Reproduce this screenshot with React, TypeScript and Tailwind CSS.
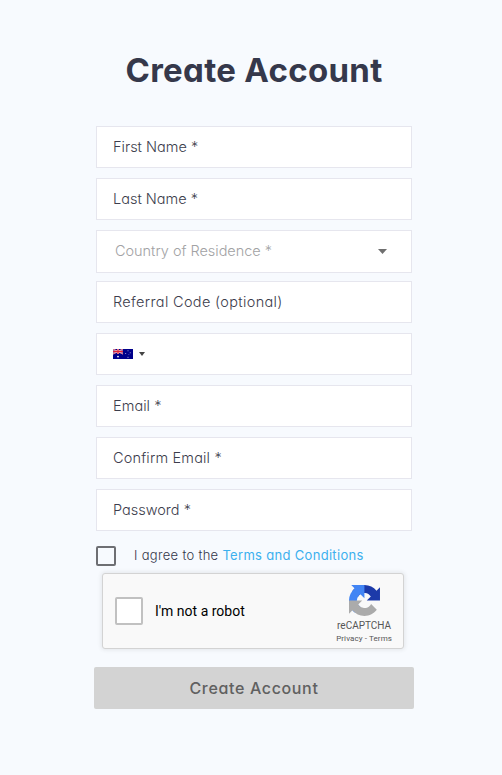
import { useState } from 'react';

type FieldProps = {
  label: string;
  textClass: string;
};

function Field({ label, textClass }: FieldProps) {
  return (
    <label className="flex h-[42px] items-center border border-[#e6e6ee] bg-white px-4">
      <span className={`whitespace-nowrap text-[14.5px] font-light text-[#3c3d4c] ${textClass}`}>{label}</span>
    </label>
  );
}

function Caret({ className }: { className: string }) {
  return (
    <svg viewBox="0 0 10 5" className={className} fill="currentColor" preserveAspectRatio="none">
      <path d="M0 0h10L5 5z" />
    </svg>
  );
}

function AustralianFlag() {
  return (
    <svg viewBox="0 0 20 10" className="h-[10px] w-5">
      <path fill="#00008b" d="M0 0h20v10H0z" />
      <path stroke="#fff" strokeWidth="1" d="M0 0l10 5M10 0L0 5" />
      <path stroke="#e0344a" strokeWidth=".7" d="M0 0l10 5M10 0L0 5" />
      <path stroke="#fff" strokeWidth="1.8" d="M5 0v5M0 2.5h10" />
      <path stroke="#e0243c" strokeWidth="1.3" d="M5 0v5M0 2.5h10" />
      <circle cx="5" cy="7.6" r=".9" fill="#fff" />
      <g fill="#c5c5e8">
        <circle cx="15" cy="1.8" r=".5" />
        <circle cx="12.7" cy="4.4" r=".5" />
        <circle cx="17.2" cy="3.8" r=".5" />
        <circle cx="15.9" cy="5.4" r=".35" />
        <circle cx="15" cy="8.3" r=".55" />
      </g>
    </svg>
  );
}

function RecaptchaLogo() {
  return (
    <svg viewBox="0 0 64 64" className="size-[31px]">
      <path
        fill="#1c3aa9"
        d="M64 31.955l-.033-1.37V4.687l-7.16 7.16C50.948 4.674 42.033.093 32.05.093c-10.4 0-19.622 4.96-25.458 12.64l11.736 11.86a15.55 15.55 0 0 1 4.754-5.334c2.05-1.6 4.952-2.906 8.968-2.906.485 0 .86.057 1.135.163 4.976.393 9.288 3.14 11.828 7.124l-8.307 8.307L64 31.953"
      />
      <path
        fill="#4285f4"
        d="M31.862.094l-1.37.033H4.594l7.16 7.16C4.58 13.147 0 22.06 0 32.046c0 10.4 4.96 19.622 12.64 25.458L24.5 45.768a15.55 15.55 0 0 1-5.334-4.754c-1.6-2.05-2.906-4.952-2.906-8.968 0-.485.057-.86.163-1.135.393-4.976 3.14-9.288 7.124-11.828l8.307 8.307L31.86.095"
      />
      <path
        fill="#ababab"
        d="M.001 32.045l.033 1.37v25.898l7.16-7.16c5.86 7.173 14.774 11.754 24.76 11.754 10.4 0 19.622-4.96 25.458-12.64l-11.736-11.86a15.55 15.55 0 0 1-4.754 5.334c-2.05 1.6-4.952 2.906-8.968 2.906-.485 0-.86-.057-1.135-.163-4.976-.393-9.288-3.14-11.828-7.124l8.307-8.307c-10.522.04-22.4.066-27.295-.005"
      />
    </svg>
  );
}

export default function App() {
  const [agreed, setAgreed] = useState(false);

  return (
    <div className="min-h-[775px] bg-[#f7fafe] pt-[46px] font-['Inter',sans-serif] [font-feature-settings:'cv11']">
      <h1 className="ml-[6px] text-center text-[33px] leading-[48px] font-bold tracking-[0.3px] text-[#35384b]">
        Create Account
      </h1>

      <form className="ml-24 mt-8 w-[316px]">
        <div className="flex flex-col gap-[10px]">
          <Field label="First Name *" textClass="tracking-normal" />
          <Field label="Last Name *" textClass="tracking-normal" />
          <div className="-mb-[2px] flex h-[43px] items-center justify-between border border-[#e6e6ee] bg-white pl-[18px] pr-6">
            <span className="whitespace-nowrap pb-px text-[14.5px] font-light tracking-[-0.03px] text-[#a2a2a4]">
              Country of Residence *
            </span>
            <Caret className="h-[5px] w-[9px] text-[#6f6f6f]" />
          </div>
          <Field label="Referral Code (optional)" textClass="tracking-[0.34px]" />
          <div className="flex h-[42px] items-center gap-[6px] border border-[#e6e6ee] bg-white px-4">
            <AustralianFlag />
            <Caret className="h-1 w-[6px] text-[#444]" />
          </div>
          <Field label="Email *" textClass="tracking-[0.05px]" />
          <Field label="Confirm Email *" textClass="tracking-[0.17px]" />
          <Field label="Password *" textClass="tracking-normal" />
        </div>

        <div className="mt-[15px] flex h-5 items-center gap-[18px]">
          <button
            type="button"
            role="checkbox"
            aria-checked={agreed}
            onClick={() => setAgreed(!agreed)}
            className="size-5 shrink-0 rounded-[2px] border-2 border-[#6e6f73]"
          />
          <span className="whitespace-nowrap text-[13px] font-light tracking-[0.31px] text-[#34364a]">
            I agree to the <a className="font-normal text-[#3cb0ee]">Terms and Conditions</a>
          </span>
        </div>

        <div className="ml-[6px] mt-[7px] flex h-[76px] w-[302px] items-center justify-between rounded-[3px] border border-[#d3d3d3] bg-[#f9f9f9] pl-3 pr-[11px] font-['Roboto',sans-serif] shadow-[0_0_4px_1px_rgba(0,0,0,0.08)]">
          <div className="flex items-center gap-3">
            <div className="size-7 rounded-[2px] border-2 border-[#c1c1c1] bg-white" />
            <span className="text-sm text-black">I'm not a robot</span>
          </div>
          <div className="flex flex-col items-center pt-[7px] text-[#555]">
            <RecaptchaLogo />
            <span className="mt-[3px] text-[10px] leading-[14px]">reCAPTCHA</span>
            <span className="whitespace-nowrap text-[8px] leading-[11px] tracking-[0.1px]">Privacy - Terms</span>
          </div>
        </div>

        <button
          type="button"
          className="-ml-[2px] mt-[18px] h-[42px] w-80 rounded-[2px] bg-[#d3d3d3] pb-px text-base font-medium tracking-[0.65px] text-[#606060]"
        >
          Create Account
        </button>
      </form>
    </div>
  );
}
